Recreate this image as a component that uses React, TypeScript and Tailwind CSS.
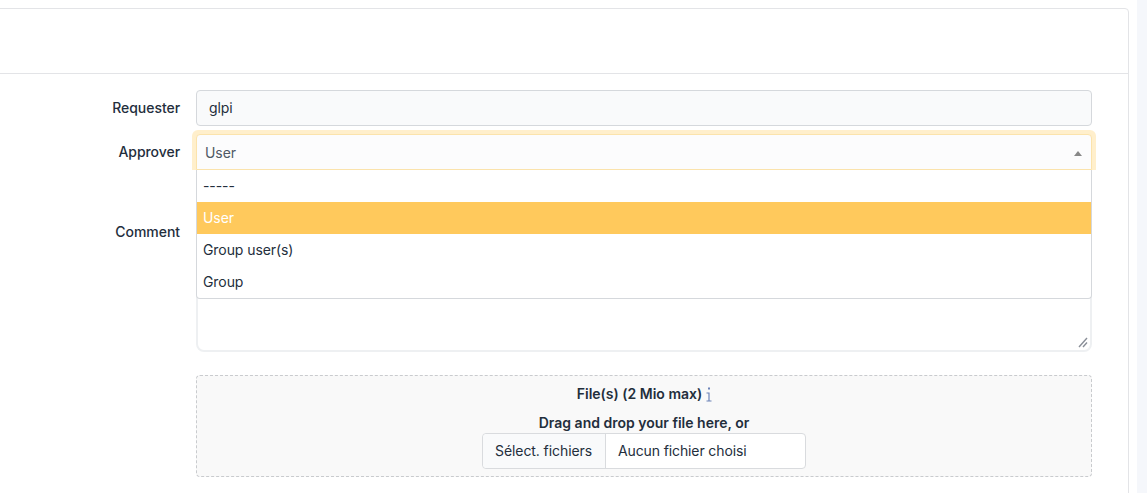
export default function App() {
  const options = ['-----', 'User', 'Group user(s)', 'Group'];

  return (
    <div className="flex h-[493px] w-[1147px] overflow-hidden bg-white font-['Inter',sans-serif] text-[14px] text-[#232e3c]">
      <div className="w-[1137px] pt-2">
        <div className="-ml-2 h-[600px] w-[1137px] rounded-tr-[4px] border border-[#e3e4e7]">
          <div className="h-[65px] border-b border-[#e3e4e7]" />

          <div className="flex flex-col pt-4 pr-[36px]">
            <div className="flex h-9 items-center">
              <label className="w-[187px] pb-[2px] text-right font-medium tracking-[-0.05px]">Requester</label>
              <div className="ml-4 flex h-9 flex-1 items-center rounded-[4px] border border-[#d5d8dc] bg-[#f9fafb] px-3 pb-[2px] tracking-[-0.08px]">
                glpi
              </div>
            </div>

            <div className="relative z-10 mt-2 flex h-9 items-start">
              <label className="w-[187px] pt-[7px] text-right font-medium tracking-[-0.05px]">Approver</label>
              <div className="relative ml-4 flex-1">
                <div className="absolute -inset-x-1 -top-1 h-[40px] rounded-t-[6px] bg-[#ffefcc]" />
                <div className="relative flex h-9 items-center justify-between rounded-t-[4px] border border-[#fbe3ac] bg-[#fcfcfd] pr-[9px] pl-2 tracking-[-0.08px] text-[#4f5965]">
                  User
                  <svg width="8" height="5" viewBox="0 0 8 5" className="mt-[2px]">
                    <path d="M4 0 L8 5 L0 5 Z" fill="#888888" />
                  </svg>
                </div>
                <ul className="absolute top-9 right-0 left-0 rounded-b-[4px] border border-t-0 border-[#d5d8dc] bg-white tracking-[-0.08px]">
                  {options.map((option) => (
                    <li
                      key={option}
                      className={
                        option === 'User'
                          ? 'flex h-8 items-center bg-[#ffc95c] px-[6px] pb-[2px] text-white'
                          : 'flex h-8 items-center px-[6px] pb-[2px]'
                      }
                    >
                      {option}
                    </li>
                  ))}
                </ul>
              </div>
            </div>

            <div className="mt-2 flex items-start">
              <label className="w-[187px] pt-[43px] text-right font-medium tracking-[-0.05px]">Comment</label>
              <div className="ml-4 flex-1">
                <div className="relative mt-[2px] h-[172px] rounded-[8px] border-2 border-[#eef0f2] bg-white">
                  <svg width="10" height="11" viewBox="0 0 10 11" className="absolute right-[2px] bottom-[2px]">
                    <path d="M1 10 L9 1 M5 10 L9 5.5" stroke="#8a8f98" strokeWidth="1.4" fill="none" />
                  </svg>
                </div>

                <div className="mt-[23px] flex h-[102px] flex-col items-center rounded-[4px] border border-dashed border-[#c9cbce] bg-[#f9f9f9] pt-[7px]">
                  <div className="flex h-5 items-center font-semibold">
                    <span className="ml-[1px]">File(s) (2 Mio max)</span>
                    <svg width="6" height="15" viewBox="0 0 6 15" className="mt-[2px] ml-[4px]">
                      <path d="M2 0.5 H4 V2.5 H2 Z M0.5 5.5 H3.6 V13.5 H5.5 V14.5 H0.5 V13.5 H2.4 V6.5 H0.5 Z" fill="#6d84b8" />
                    </svg>
                  </div>
                  <div className="mt-[9px] flex h-5 items-center font-semibold">Drag and drop your file here, or</div>
                  <div className="mt-[1px] flex h-9 w-[324px] items-center rounded-[4px] border border-[#d9dbde] bg-white tracking-[-0.08px]">
                    <div className="flex h-full w-[123px] items-center rounded-l-[4px] border-r border-[#d9dbde] bg-[#f9fafb] pb-[2px] pl-3 whitespace-nowrap">
                      Sélect. fichiers
                    </div>
                    <div className="px-3 pb-[2px] tracking-[-0.12px] whitespace-nowrap">Aucun fichier choisi</div>
                  </div>
                </div>
              </div>
            </div>
          </div>
        </div>
      </div>
      <div className="h-full w-[10px] bg-[#f5f7fb]" />
    </div>
  );
}
